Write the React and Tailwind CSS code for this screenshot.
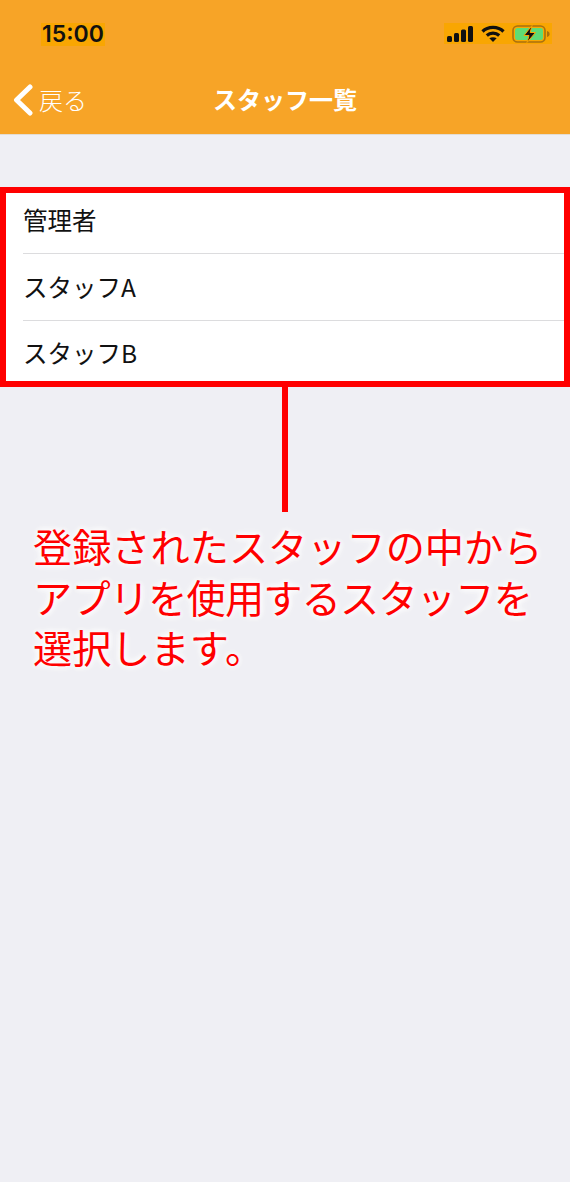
const jp = '"Noto Sans CJK JP", "Liberation Sans", sans-serif';

const StatusIcons = () => (
  <div className="flex items-center bg-[#f9a602] w-[108px] h-[21px] pl-[3px]">
    <svg width="27" height="16" viewBox="0 0 27 16" fill="#111">
      <rect x="0" y="10" width="5" height="6" rx="1.5" />
      <rect x="7" y="7" width="5" height="9" rx="1.5" />
      <rect x="14" y="3.500" width="5" height="12.500" rx="1.5" />
      <rect x="21" y="0" width="5" height="16" rx="1.5" />
    </svg>
    <svg width="24" height="17" viewBox="0 0 24 17" fill="none" stroke="#111" strokeWidth="3.200" className="ml-[7px]">
      <path d="M1.500 6.500C7 1 17 1 22.500 6.500" />
      <path d="M5.800 10.500C9.200 7.400 14.800 7.400 18.200 10.500" />
      <path d="M12 17l-3.600-3.700c2-1.500 5.200-1.500 7.200 0z" fill="#111" stroke="none" />
    </svg>
    <svg width="38" height="18" viewBox="0 0 38 18" className="ml-[7px]">
      <rect x="1" y="1" width="32" height="16" rx="4.500" fill="none" stroke="#a9700f" strokeWidth="1.600" />
      <rect x="3" y="3" width="28" height="12" rx="2.500" fill="#5fdc74" />
      <path d="M35 6c1.600.4 2.600 1.500 2.600 3s-1 2.600-2.600 3z" fill="#a9700f" />
      <path d="M20 0.500L12 10.500h5l-2 7L23.500 7.500h-5.300z" fill="#111" stroke="#f9a602" strokeWidth="1" />
    </svg>
  </div>
);

export default function App() {
  return (
    <div className="w-[570px] h-[1182px] bg-[#efeff4] flex flex-col overflow-hidden" style={{ fontFamily: jp }}>
      <header className="h-[135px] bg-[#f7a427] border-b border-[#e3dcd2] flex flex-col shrink-0">
        <div className="h-[70px] flex items-start justify-between pt-[23px] pl-[41px] pr-[18px]">
          <div
            className="bg-[#f9a602] w-[64px] h-[23px] flex items-center justify-center text-[#111] text-[23px] font-semibold leading-none"
            style={{ fontFamily: 'Inter, sans-serif' }}
          >
            15:00
          </div>
          <StatusIcons />
        </div>
        <div className="relative flex-1 flex items-center justify-center pb-[6px] text-white">
          <div className="absolute left-[13px] top-[14px] flex items-center gap-[6px]">
            <svg width="20" height="32" viewBox="0 0 20 32" fill="none" stroke="#fff" strokeWidth="5" strokeLinecap="round" strokeLinejoin="round">
              <path d="M17 3L3.500 16 17 29" />
            </svg>
            <span className="text-[24px] leading-none font-light">戻る</span>
          </div>
          <h1 className="text-[24px] font-bold leading-none">スタッフ一覧</h1>
        </div>
      </header>

      <ul className="mt-[52px] border-[6px] border-[#ff0000] bg-white h-[200px] flex flex-col shrink-0 text-[24.500px] leading-none text-[#111]">
        <li className="pl-[17px]">
          <div className="h-[61px] flex items-center pb-[6px] border-b border-[#dcdcde]">管理者</div>
        </li>
        <li className="pl-[17px]">
          <div className="h-[67px] flex items-center border-b border-[#dcdcde]">スタッフA</div>
        </li>
        <li className="pl-[17px]">
          <div className="h-[60px] flex items-center pt-[5px]">スタッフB</div>
        </li>
      </ul>

      <div className="w-[6px] h-[125px] bg-[#ff0000] ml-[282px] shrink-0" />

      <p className="mt-[8px] ml-[33px] w-[520px] text-[39.200px] leading-[50.500px] text-[#ff0000] [text-shadow:0_0_6px_#ffffff,0_0_6px_#ffffff,0_0_10px_#ffffff]">
        登録されたスタッフの中から
        <br />
        <span className="tracking-[-0.800px]">アプリを使用するスタッフを</span>
        <br />
        選択します。
      </p>
    </div>
  );
}
